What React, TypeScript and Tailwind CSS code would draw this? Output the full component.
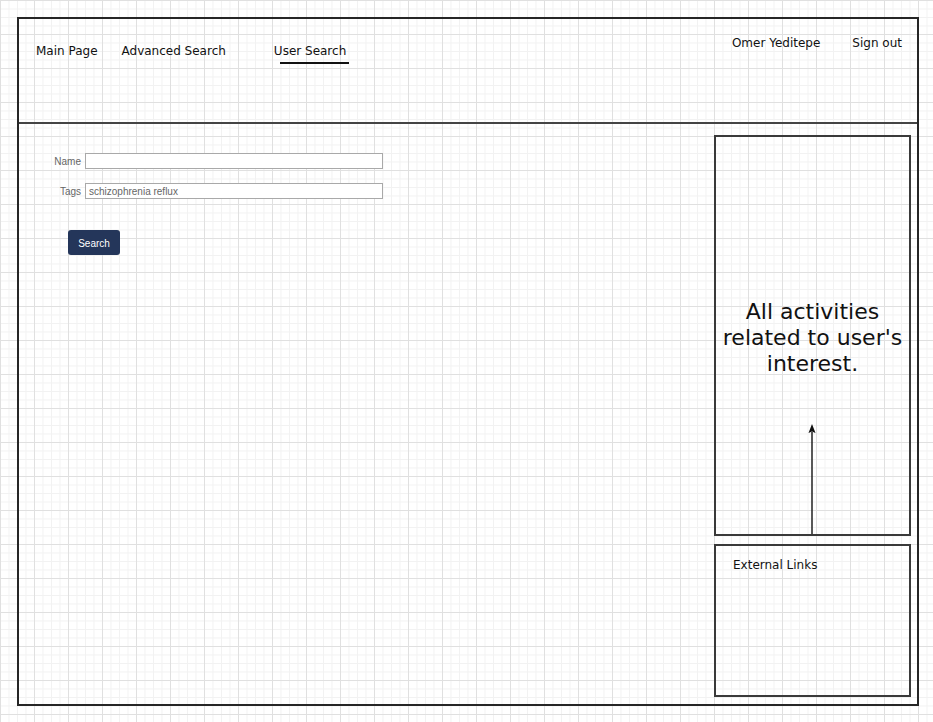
import React from 'react';

const navLeft = [
  { label: 'Main Page', active: false },
  { label: 'Advanced Search', active: false },
  { label: 'User Search', active: true },
];

function Field({ label, value }: { label: string; value?: string }) {
  return (
    <div className="flex items-center">
      <span className="w-[63px] pr-[1px] text-right text-[10px] text-[#666]">{label}</span>
      <div className="ml-[3px] flex h-[16px] w-[298px] items-center border border-[#a9a9a9] bg-white px-[3px] text-[10px] text-[#666]">
        {value}
      </div>
    </div>
  );
}

export default function App() {
  return (
    <div
      className="h-[722px] w-[933px] overflow-hidden bg-white bg-[linear-gradient(to_right,#e0e0e0_1px,transparent_1px),linear-gradient(to_bottom,#e0e0e0_1px,transparent_1px),linear-gradient(to_right,#f2f2f2_1px,transparent_1px),linear-gradient(to_bottom,#f2f2f2_1px,transparent_1px)] bg-[size:34px_34px,34px_34px,8.5px_8.5px,8.5px_8.5px] pl-[17px] pt-[17px]"
      style={{ fontFamily: '"DejaVu Sans", Verdana, sans-serif' }}
    >
      <div className="flex h-[689px] w-[902px] flex-col border-2 border-[#262626]">
        {/* header */}
        <header className="flex h-[105px] shrink-0 justify-between border-b-2 border-[#444] text-[12px] text-[#111]">
          <nav className="flex pl-[17px] pt-[25px]">
            {navLeft.map((item, i) => (
              <div
                key={item.label}
                className={i === 1 ? 'ml-[24px]' : i === 2 ? 'ml-[48px]' : ''}
              >
                <div className="leading-[14px]">{item.label}</div>
                {item.active && <div className="ml-[6px] mt-[4px] h-[2px] w-[69px] bg-[#111]" />}
              </div>
            ))}
          </nav>
          <div className="flex gap-[32px] pr-[15px] pt-[17px] leading-[14px]">
            <span>Omer Yeditepe</span>
            <span>Sign out</span>
          </div>
        </header>

        {/* body */}
        <div className="flex flex-1">
          <div
            className="flex-1 pt-[29px]"
            style={{ fontFamily: '"Liberation Sans", Arial, sans-serif' }}
          >
            <div className="flex flex-col gap-[14px]">
              <Field label="Name" />
              <Field label="Tags" value="schizophrenia reflux" />
            </div>
            <button className="ml-[49px] mt-[31px] h-[25px] w-[52px] rounded-[3px] bg-[#24365a] pt-[1px] text-[10px] text-white">
              Search
            </button>
          </div>

          <aside className="flex w-[203px] flex-col gap-[8px] pb-[7px] pr-[6px] pt-[11px]">
            <div className="relative flex h-[401px] items-center justify-center border-2 border-[#3a3a3a]">
              <p className="mt-[5px] text-center text-[22px] leading-[26px] text-[#111]">
                All activities
                <br />
                related to user's
                <br />
                interest.
              </p>
              <svg
                className="absolute bottom-0 left-[90px]"
                width="12"
                height="110"
                viewBox="0 0 12 110"
              >
                <line x1="6" y1="8" x2="6" y2="110" stroke="#222" strokeWidth="1.5" />
                <path d="M6 0 L9.5 9 L6 7.5 L2.5 9 Z" fill="#111" />
              </svg>
            </div>
            <div className="flex-1 border-2 border-[#3a3a3a] pl-[17px] pt-[10px] text-[12px] text-[#111]">
              External Links
            </div>
          </aside>
        </div>
      </div>
    </div>
  );
}
